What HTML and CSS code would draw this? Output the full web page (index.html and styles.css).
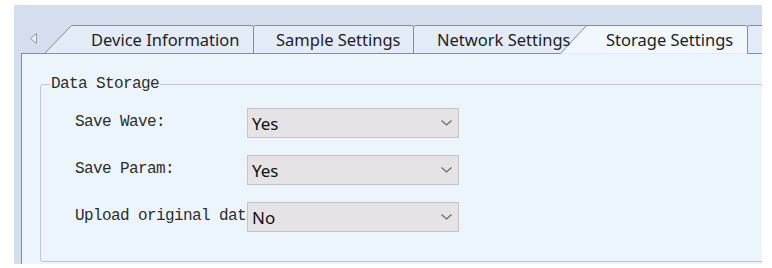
FILE: index.html
```html
<!DOCTYPE html>
<html>
<head>
    <title>Storage Settings</title>
    <link rel="stylesheet" href="styles.css">
</head>
<body>
    <div class="window">
        <div class="tabbar">
            <svg class="tab-shapes" width="748" height="49" viewBox="0 0 748 49">
                <polygon class="arrow" points="22.5,28.5 22.5,38.5 16.5,33.5"/>
                <path class="tab" d="M30.5,48.5 L57.5,20.5 L237.5,20.5 Q239.5,20.5 239.5,22.5 L239.5,48.5"/>
                <path class="tab" d="M239.5,48.5 L239.5,22.5 Q239.5,20.5 241.5,20.5 L397.5,20.5 Q399.5,20.5 399.5,22.5 L399.5,48.5"/>
                <path class="tab" d="M399.5,48.5 L399.5,22.5 Q399.5,20.5 401.5,20.5 L590,20.5 L590,48.5"/>
                <path class="tab" d="M733.5,48.5 L733.5,22.5 Q733.5,20.5 735.5,20.5 L760,20.5 L760,48.5"/>
                <path class="tab active" d="M546.5,48.5 L572.5,20.5 L731.5,20.5 Q733.5,20.5 733.5,22.5 L733.5,48.5"/>
                <path class="line" d="M7,48.5 H546.5 M733.5,48.5 H748"/>
            </svg>
            <div class="tab-labels">
                <span class="tab-label label-device">Device Information</span>
                <span class="tab-label label-sample">Sample Settings</span>
                <span class="tab-label label-network">Network Settings</span>
                <span class="tab-label label-storage">Storage Settings</span>
            </div>
        </div>
        <div class="panel">
            <fieldset class="group">
                <legend class="group-title">Data Storage</legend>
                <div class="row">
                    <div class="row-label">Save Wave:</div>
                    <div class="combo">
                        <span class="combo-value">Yes</span>
                        <svg class="chevron" width="11" height="6" viewBox="0 0 11 6"><polyline points="0.5,0.5 5.5,5 10.5,0.5"/></svg>
                    </div>
                </div>
                <div class="row">
                    <div class="row-label">Save Param:</div>
                    <div class="combo">
                        <span class="combo-value">Yes</span>
                        <svg class="chevron" width="11" height="6" viewBox="0 0 11 6"><polyline points="0.5,0.5 5.5,5 10.5,0.5"/></svg>
                    </div>
                </div>
                <div class="row">
                    <div class="row-label">Upload original data:</div>
                    <div class="combo">
                        <span class="combo-value">No</span>
                        <svg class="chevron" width="11" height="6" viewBox="0 0 11 6"><polyline points="0.5,0.5 5.5,5 10.5,0.5"/></svg>
                    </div>
                </div>
            </fieldset>
        </div>
    </div>
</body>
</html>
```

FILE: styles.css
```css
body {
    margin: 0;
    background: #fff;
    font-family: "Noto Sans", Arial, sans-serif;
}
.window {
    margin: 5px 0 0 14px;
    width: 748px;
    height: 259px;
    background: #d5deef;
    overflow: hidden;
}
.tabbar {
    height: 49px;
    position: relative;
}
.tab-shapes {
    position: absolute;
    top: 0;
    left: 0;
}
.tab {
    fill: #e3ecf8;
    stroke: #878d97;
    stroke-width: 1;
}
.tab.active {
    fill: #f2f8fd;
}
.line {
    stroke: #878d97;
    fill: none;
}
.arrow {
    fill: #e8edf4;
    stroke: #939aa5;
}
.tab-labels {
    position: relative;
    display: flex;
    padding-top: 22px;
    padding-left: 77px;
    font-size: 16.5px;
    line-height: 26px;
    color: #1e1e1e;
}
.tab-label {
    white-space: nowrap;
}
.label-device {
    width: 185px;
}
.label-sample {
    width: 161px;
}
.label-network {
    width: 169px;
}
.panel {
    height: 210px;
    margin-left: 7px;
    border-left: 1px solid #878d97;
    background: #ecf5fc;
    padding: 22px 0 0 18px;
}
.group {
    margin: 0;
    width: 760px;
    height: 186px;
    box-sizing: border-box;
    border: 1px solid #c2c6cd;
    border-radius: 3px;
    padding: 16px 0 0 0;
    display: flex;
    flex-direction: column;
    gap: 17px;
}
.group-title {
    margin-left: 9px;
    padding: 0 1px;
    font-family: "Liberation Mono", monospace;
    font-size: 16px;
    letter-spacing: -0.6px;
    line-height: 16px;
    color: #2c2c2c;
}
.row {
    display: flex;
    align-items: center;
    height: 30px;
    padding-left: 34px;
}
.row-label {
    width: 172px;
    overflow: hidden;
    white-space: nowrap;
    font-family: "Liberation Mono", monospace;
    font-size: 16px;
    letter-spacing: -0.6px;
    color: #2c2c2c;
    padding-bottom: 3px;
}
.combo {
    width: 212px;
    height: 30px;
    box-sizing: border-box;
    border: 1px solid #c6c3c9;
    background: #e6e3e7;
    display: flex;
    align-items: center;
    justify-content: space-between;
    padding: 0 6px 0 4px;
}
.combo-value {
    font-size: 17px;
    color: #111;
}
.chevron polyline {
    fill: none;
    stroke: #6a6a6a;
    stroke-width: 1.2;
}
```
